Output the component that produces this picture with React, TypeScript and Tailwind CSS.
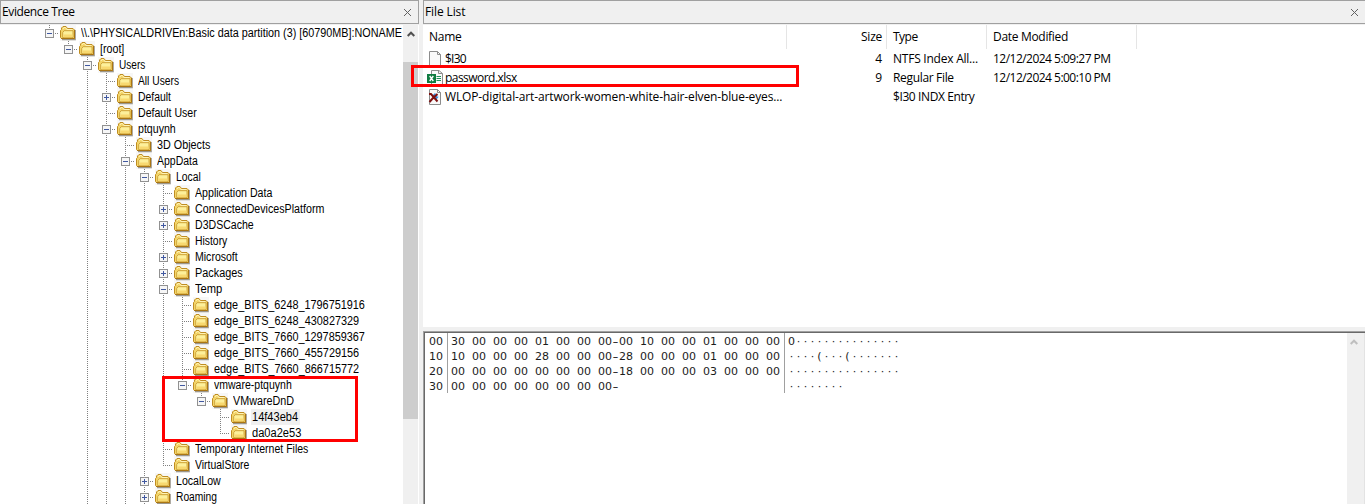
import { useLayoutEffect, useRef, useState } from "react";

type NodeRow = {
  label: string;
  level: number;
  width: number;
  box?: "+" | "-";
  // Levels whose vertical guide passes through this row
  through: number[];
  last?: boolean;
  selected?: boolean;
};

const ROWS: NodeRow[] = [
  { label: "\\\\.\\PHYSICALDRIVEn:Basic data partition (3) [60790MB]:NONAME", level: 0, width: 321, box: "-", through: [], last: true },
  { label: "[root]", level: 1, width: 24, box: "-", through: [], last: true },
  { label: "Users", level: 2, width: 26, box: "-", through: [] },
  { label: "All Users", level: 3, width: 41, through: [2] },
  { label: "Default", level: 3, width: 33, box: "+", through: [2] },
  { label: "Default User", level: 3, width: 59, through: [2] },
  { label: "ptquynh", level: 3, width: 38, box: "-", through: [2] },
  { label: "3D Objects", level: 4, width: 53, through: [2, 3] },
  { label: "AppData", level: 4, width: 41, box: "-", through: [2, 3] },
  { label: "Local", level: 5, width: 25, box: "-", through: [2, 3, 4] },
  { label: "Application Data", level: 6, width: 77, through: [2, 3, 4, 5] },
  { label: "ConnectedDevicesPlatform", level: 6, width: 129, box: "+", through: [2, 3, 4, 5] },
  { label: "D3DSCache", level: 6, width: 59, box: "+", through: [2, 3, 4, 5] },
  { label: "History", level: 6, width: 32, through: [2, 3, 4, 5] },
  { label: "Microsoft", level: 6, width: 43, box: "+", through: [2, 3, 4, 5] },
  { label: "Packages", level: 6, width: 48, box: "+", through: [2, 3, 4, 5] },
  { label: "Temp", level: 6, width: 27, box: "-", through: [2, 3, 4, 5] },
  { label: "edge_BITS_6248_1796751916", level: 7, width: 151, through: [2, 3, 4, 5, 6] },
  { label: "edge_BITS_6248_430827329", level: 7, width: 145, through: [2, 3, 4, 5, 6] },
  { label: "edge_BITS_7660_1297859367", level: 7, width: 151, through: [2, 3, 4, 5, 6] },
  { label: "edge_BITS_7660_455729156", level: 7, width: 145, through: [2, 3, 4, 5, 6] },
  { label: "edge_BITS_7660_866715772", level: 7, width: 145, through: [2, 3, 4, 5, 6] },
  { label: "vmware-ptquynh", level: 7, width: 78, box: "-", through: [2, 3, 4, 5, 6], last: true },
  { label: "VMwareDnD", level: 8, width: 61, box: "-", through: [2, 3, 4, 5, 6], last: true },
  { label: "14f43eb4", level: 9, width: 46, through: [2, 3, 4, 5, 6], selected: true },
  { label: "da0a2e53", level: 9, width: 49, through: [2, 3, 4, 5, 6], last: true },
  { label: "Temporary Internet Files", level: 6, width: 113, through: [2, 3, 4, 5] },
  { label: "VirtualStore", level: 6, width: 54, through: [2, 3, 4, 5], last: true },
  { label: "LocalLow", level: 5, width: 45, box: "+", through: [2, 3, 4] },
  { label: "Roaming", level: 5, width: 41, box: "+", through: [2, 3, 4] },
];

const HEX = [
  { off: "00", hex: "30 00 00 00 01 00 00 00-00 10 00 00 01 00 00 00", text: "0···············" },
  { off: "10", hex: "10 00 00 00 28 00 00 00-28 00 00 00 01 00 00 00", text: "····(···(·······" },
  { off: "20", hex: "00 00 00 00 00 00 00 00-18 00 00 00 03 00 00 00", text: "················" },
  { off: "30", hex: "00 00 00 00 00 00 00 00-", text: "········" },
];

// Makes the text take the given width, by letter spacing or by narrowing the glyphs.
function Fit({ text, width, narrow }: { text: string; width: number; narrow?: boolean }) {
  const ref = useRef<HTMLSpanElement>(null);
  const [natural, setNatural] = useState(width);
  useLayoutEffect(() => {
    if (ref.current) setNatural(ref.current.offsetWidth);
  }, [text]);
  if (narrow) {
    return (
      <span className="inline-block whitespace-nowrap" style={{ width: `${width}px` }}>
        <span
          ref={ref}
          className="inline-block origin-left whitespace-pre"
          style={{ transform: `scaleX(${width / natural})` }}
        >
          {text}
        </span>
      </span>
    );
  }
  return (
    <span
      ref={ref}
      className="inline-block whitespace-pre"
      style={{ letterSpacing: `${(width - natural) / text.length}px` }}
    >
      {text}
    </span>
  );
}

function Connector({ kind, box, last }: { kind: "none" | "through" | "node"; box?: "+" | "-"; last?: boolean }) {
  return (
    <svg width="19" height="16" viewBox="0 0 19 16" shapeRendering="crispEdges" className="shrink-0">
      {kind !== "none" && (
        <path d={kind === "node" && last ? "M9.5 0V9" : "M9.5 0V16"} stroke="#808080" strokeDasharray="1 1" />
      )}
      {kind === "node" && <path d="M9 8.5H19" stroke="#808080" strokeDasharray="1 1" />}
      {box && (
        <>
          <rect x="5.5" y="4.5" width="8" height="8" fill="#f6f6f6" stroke="#919191" />
          <path d="M7 8.5H12" stroke="#4058a0" />
          {box === "+" && <path d="M9.5 6V11" stroke="#4058a0" />}
        </>
      )}
    </svg>
  );
}

function Folder() {
  return (
    <svg width="17" height="16" viewBox="0 0 17 16" className="mr-px shrink-0">
      <rect x="1" y="0" width="16" height="16" fill="#f7f7f7" />
      <path d="M3 14.6H16.2V5" fill="none" stroke="#9c978c" strokeWidth="1.2" />
      <path d="M1.5 12.5V5.5L2.5 4.5V3L4 1.5H7L8.5 3.5H14L15.5 5V13.5H2.5Z" fill="#f3d468" stroke="#bf8d22" />
      <path d="M4 4L5 2.5H6.5L7.8 4.5H13.5" fill="none" stroke="#fff3b5" />
      <path d="M3.7 12.5V7.5L5.2 5.7H14V12.5Z" fill="#fdf09a" stroke="#c4962c" strokeWidth=".8" />
      <path d="M4.5 9.5H13.5V12.4H4.5Z" fill="#f8d970" />
      <path d="M2 13.5H15.5V5" fill="none" stroke="#aa7614" />
    </svg>
  );
}

function Page({ kind }: { kind: "blank" | "excel" | "deleted" }) {
  return (
    <svg width="18" height="16" viewBox="0 0 18 16" className="shrink-0">
      {kind === "excel" ? (
        <>
          <path d="M4.5 .5H12L15.5 3.5V15.5H4.5Z" fill="#fafafa" stroke="#8c8c8c" />
          <path d="M11.5 .5V3.5H15.5" fill="none" stroke="#8c8c8c" />
          <path d="M9.5 6.5H14M9.5 8.5H14M9.5 10.5H14" stroke="#21935a" />
          <rect x="0" y="4" width="9" height="9" fill="#107c41" />
          <path d="M2.7 6L6.3 11M6.3 6L2.7 11" stroke="#fff" strokeWidth="1.4" />
        </>
      ) : (
        <>
          <path d="M2.5 .5H10.5L13.5 3.5V15.5H2.5Z" fill="#f9f9f9" stroke="#8c8c8c" />
          <path d="M10.5 .5V3.5H13.5" fill="none" stroke="#8c8c8c" />
        </>
      )}
      {kind === "deleted" && (
        <>
          <path d="M5 7L8 4L11.5 8L9 11Z" fill="#3b8ede" />
          <path d="M8 4.5L11 8" stroke="#9ed0ff" />
          <path d="M2 5H4L10.5 12.5M10.5 5L6 9L2.5 13" fill="none" stroke="#7f1010" strokeWidth="2" />
        </>
      )}
    </svg>
  );
}

function Close() {
  return (
    <svg width="7" height="7" viewBox="0 0 7 7" className="shrink-0">
      <path d="M0 0L7 7M7 0L0 7" stroke="#626262" />
    </svg>
  );
}

function Caret({ className }: { className: string }) {
  return (
    <svg width="8" height="6" viewBox="0 0 8 6" className={className}>
      <path d="M.7 5L4 1.7L7.3 5" fill="none" stroke="currentColor" strokeWidth="2" />
    </svg>
  );
}

function TitleBar({ title, width, pad }: { title: string; width: number; pad: string }) {
  return (
    <div className={`flex h-6 shrink-0 items-center justify-between border border-[#a0a0a0] bg-[#f0f0f0] pl-px ${pad}`}>
      <Fit text={title} width={width} />
      <Close />
    </div>
  );
}

function TreeRow({ row }: { row: NodeRow }) {
  const levels = Array.from({ length: row.level }, (_, i) => i);
  return (
    <div className="flex h-4 items-center">
      {levels.map((l) => (
        <Connector key={l} kind={row.through.includes(l) ? "through" : "none"} />
      ))}
      <Connector kind="node" box={row.box} last={row.last || row.level < 2} />
      <Folder />
      <span className={`ml-[3px] h-4 shrink-0 pr-0.5 pl-px leading-4 ${row.selected ? "bg-[#f0f0f0]" : ""}`}>
        <Fit text={row.label} width={row.width} narrow />
      </span>
    </div>
  );
}

function FileRow({ kind, name, nameWidth, size, type, typeWidth, date }: {
  kind: "blank" | "excel" | "deleted"; name: string; nameWidth: number; size: string; type: string; typeWidth: number; date: string;
}) {
  return (
    <div className="grid h-[19px] grid-cols-[364px_100px_100px_150px] items-center">
      <div className="flex items-center pl-1">
        <Page kind={kind} />
        <Fit text={name} width={nameWidth} />
      </div>
      <div className="pr-[5px] text-right">{size}</div>
      <div className="pl-1.5"><Fit text={type} width={typeWidth} /></div>
      <div className="pl-1.5">{date && <Fit text={date} width={118} />}</div>
    </div>
  );
}

function HexChars({ text }: { text: string }) {
  return (
    <div className="flex h-[15px]">
      {text.split("").map((c, i) => (
        <span key={i} className={`w-[7px] text-center whitespace-pre ${c === "-" ? "scale-x-150" : ""}`}>{c}</span>
      ))}
    </div>
  );
}

export default function App() {
  return (
    <div className="relative flex h-[504px] w-[1365px] overflow-hidden bg-[#f0f0f0] font-['Open_Sans','Noto_Sans',sans-serif] text-[12px] leading-4 text-black">
      <section className="flex w-[419px] shrink-0 flex-col">
        <TitleBar title="Evidence Tree" width={73} pad="pr-[7px]" />
        <div className="mt-px flex min-h-0 flex-1 bg-white">
          <div className="w-[403px] overflow-hidden pl-10 font-['Liberation_Sans',Arial,sans-serif] whitespace-nowrap">
            {ROWS.map((r) => <TreeRow key={r.label} row={r} />)}
          </div>
          <div className="flex w-[15px] flex-col items-center bg-[#f0f0f0]">
            <Caret className="mt-1.5 mb-[25px] shrink-0 text-[#505050]" />
            <div className="h-[357px] w-full shrink-0 bg-[#cdcdcd]" />
          </div>
        </div>
      </section>
      <div className="w-1 shrink-0" />
      <section className="flex min-w-0 flex-1 flex-col">
        <TitleBar title="File List" width={40} pad="pr-[7px] border-r-0" />
        <div className="mt-px h-[302px] shrink-0 bg-white">
          <div className="grid h-6 grid-cols-[364px_100px_100px_150px] items-stretch">
            <div className="border-r border-[#e5e5e5] pt-1 pl-1.5"><Fit text="Name" width={33} /></div>
            <div className="border-r border-[#e5e5e5] pt-1 pr-1 text-right"><Fit text="Size" width={21} /></div>
            <div className="border-r border-[#e5e5e5] pt-1 pl-1.5"><Fit text="Type" width={25} /></div>
            <div className="border-r border-[#e5e5e5] pt-1 pl-1.5"><Fit text="Date Modified" width={75} /></div>
          </div>
          <FileRow kind="blank" name="$I30" nameWidth={21} size="4" type="NTFS Index All..." typeWidth={85} date="12/12/2024 5:09:27 PM" />
          <FileRow kind="excel" name="password.xlsx" nameWidth={72} size="9" type="Regular File" typeWidth={61} date="12/12/2024 5:00:10 PM" />
          <FileRow kind="deleted" name="WLOP-digital-art-artwork-women-white-hair-elven-blue-eyes..." nameWidth={337} size="" type="$I30 INDX Entry" typeWidth={81} date="" />
        </div>
        <div className="mt-1 flex min-h-0 flex-1 border-t border-l border-[#a0a0a0]">
          <div className="flex min-w-0 flex-1 border-t border-l border-[#696969] bg-white">
            <div className="flex flex-1 items-start font-['DejaVu_Sans',sans-serif] text-[11px] leading-[17px] text-[#1c1c1c]">
              <div className="w-[23px] border-r border-[#a0a0a0] pl-1">
                {HEX.map((h) => <HexChars key={h.off} text={h.off} />)}
              </div>
              <div className="w-[337px] border-r border-[#a0a0a0] pl-[3px]">
                {HEX.map((h) => <HexChars key={h.off} text={h.hex} />)}
              </div>
              <div className="pl-[3px]">
                {HEX.map((h) => <HexChars key={h.off} text={h.text} />)}
              </div>
            </div>
            <div className="flex w-[18px] justify-center border-r border-[#e3e3e3] bg-[#f0f0f0]">
              <Caret className="mt-1.5 mr-1 text-[#bfbfbf]" />
            </div>
          </div>
        </div>
      </section>
      <div className="absolute top-[376px] left-[162px] h-[66px] w-[196px] border-3 border-[#ff0000]" />
      <div className="absolute top-[65px] left-[411px] h-[22px] w-[388px] border-3 border-[#ff0000]" />
    </div>
  );
}
